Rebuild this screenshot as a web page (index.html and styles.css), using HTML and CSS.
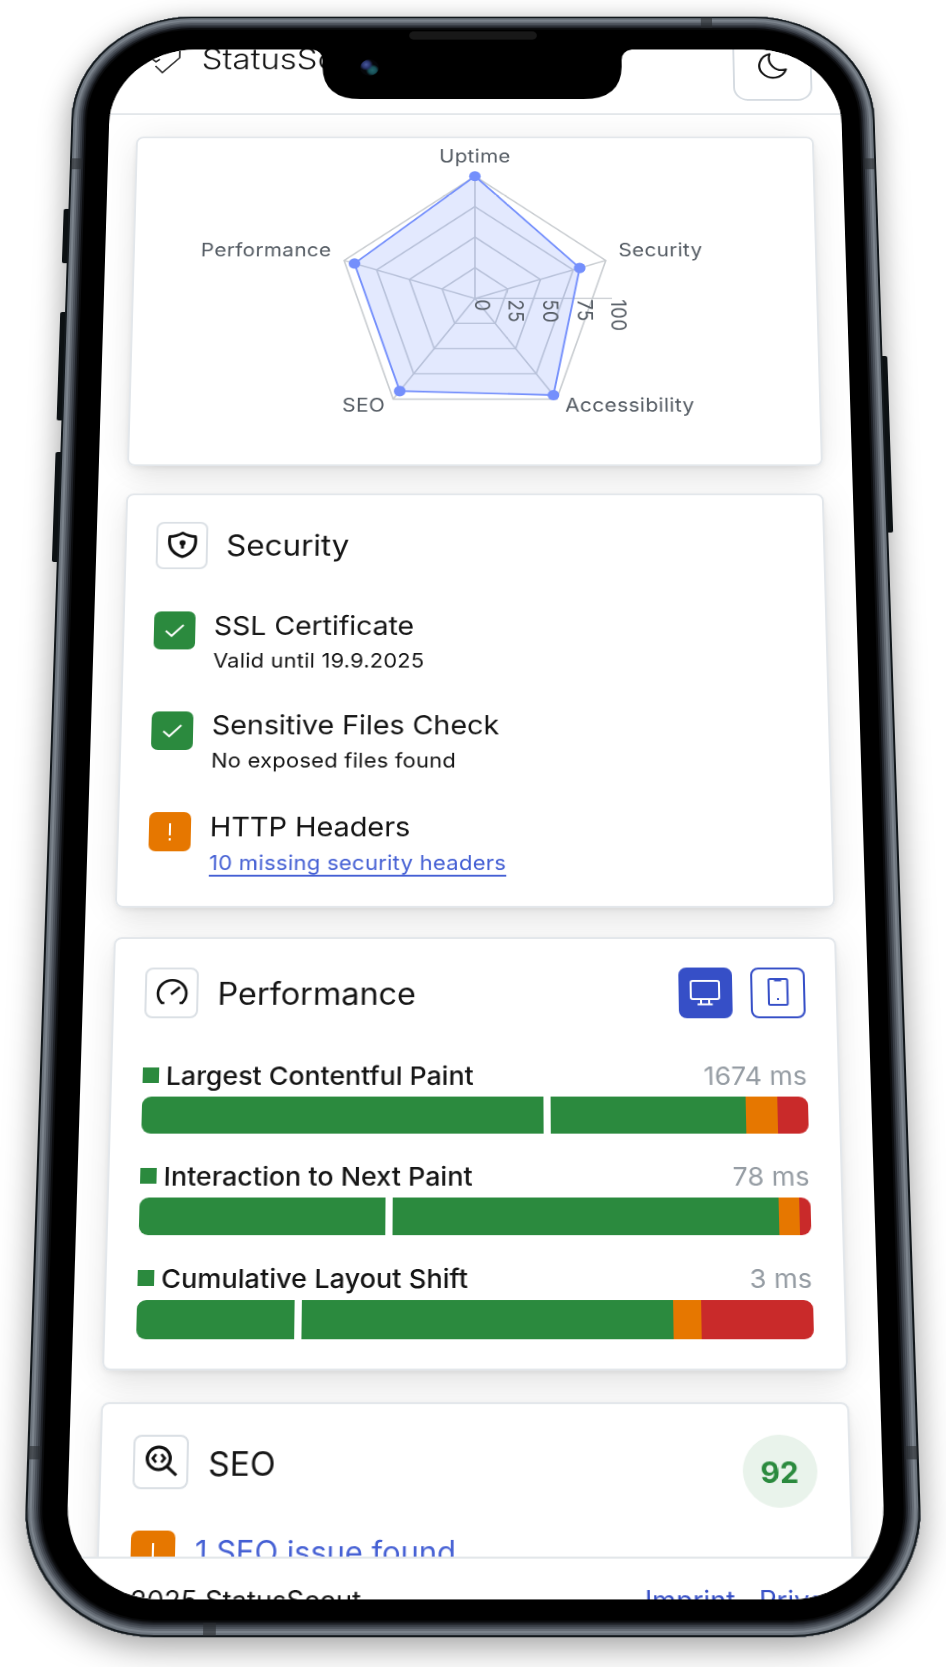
FILE: index.html
```html
<!DOCTYPE html>
<html lang="en">
<head>
<meta charset="utf-8">
<title>StatusScout</title>
<link rel="stylesheet" href="styles.css">
</head>
<body>
<div class="phone">
  <i class="key key-mute"></i><i class="key key-up"></i><i class="key key-down"></i><i class="key key-power"></i>
  <div class="case"></div>
  <i class="band band-tl"></i><i class="band band-tr"></i><i class="band band-bl"></i><i class="band band-br"></i>
  <i class="band band-top"></i><i class="band band-bottom"></i>
  <div class="screen">
    <header class="topbar">
      <div class="brand">
        <svg class="brand-icon" viewBox="0 0 40 40" fill="none" stroke="#222" stroke-width="1.7"><path d="M5 20L10 24L14 21M9.500 29L17 37L35 19V3"/></svg>
        <span class="brand-name">StatusScout</span>
      </div>
      <button class="theme"><svg viewBox="0 0 32 32" fill="none" stroke="#151515" stroke-width="2.2" stroke-linejoin="round"><path d="M14 2.6A14 14 0 1 0 30.500 20.500C20 24 10.500 14 14 2.600Z"/></svg></button>
    </header>
    <main class="main">
      <section class="card chart-card">
        <svg class="chart" viewBox="0 0 711 380">
          <g transform="translate(356 189.200) scale(.966)">
            <g fill="none" stroke="#c9cdd1" stroke-width="1.7">
              <path d="M0-149L141.700-46L87.600 120.500L-87.600 120.500L-141.700-46Z"/>
              <path d="M0-111.700L106.300-34.500L65.700 90.400L-65.700 90.400L-106.300-34.500Z"/>
              <path d="M0-74.500L70.900-23L43.800 60.300L-43.800 60.300L-70.900-23Z"/>
              <path d="M0-37.200L35.400-11.500L21.900 30.100L-21.900 30.100L-35.400-11.500Z"/>
              <path d="M0 0V-149M0 0L141.700-46M0 0L87.600 120.500M0 0L-87.600 120.500M0 0L-141.700-46M0 0H148"/>
            </g>
            <path d="M0-149L113.400-36.800L84.100 115.700L-80.600 110.900L-130.400-42.300Z" fill="#748ffc" fill-opacity=".2" stroke="#748ffc" stroke-width="2"/>
            <g fill="#748ffc"><circle cx="0" cy="-149" r="6.300"/><circle cx="113.400" cy="-36.800" r="6.300"/><circle cx="84.100" cy="115.700" r="6.300"/><circle cx="-80.600" cy="110.900" r="6.300"/><circle cx="-130.400" cy="-42.300" r="6.300"/></g>
            <g class="labels">
              <text x="0" y="-165.500" text-anchor="middle">Uptime</text>
              <text x="155.500" y="-50.700">Security</text>
              <text x="96.500" y="135.200">Accessibility</text>
              <text x="-96" y="135.200" text-anchor="end">SEO</text>
              <text x="-155.500" y="-50.700" text-anchor="end">Performance</text>
              <text transform="translate(-.5 1) rotate(90)">0</text>
              <text transform="translate(36.500 1) rotate(90)">25</text>
              <text transform="translate(73.500 1) rotate(90)">50</text>
              <text transform="translate(110.500 1) rotate(90)">75</text>
              <text transform="translate(147 1) rotate(90)">100</text>
            </g>
          </g>
        </svg>
      </section>

      <section class="card security">
        <div class="head">
          <span class="tile"><svg viewBox="0 0 32 32" fill="none" stroke="#111" stroke-width="3" stroke-linejoin="round"><path d="M16 2.500C12 5 7 6.500 3 6.500C1.500 16 4 25 16 29C28 25 30.500 16 29 6.500C25 6.500 20 5 16 2.500Z"/><circle cx="16" cy="13.500" r="1.600" fill="#111"/><path d="M16 14V20"/></svg></span>
          <h2>Security</h2>
        </div>
        <div class="rows">
          <div class="row"><span class="flag ok"><svg viewBox="0 0 22 22"><path d="M2 11.500L8 17L20 5"/></svg></span><div class="copy"><h3>SSL Certificate</h3><p>Valid until 19.9.2025</p></div></div>
          <div class="row"><span class="flag ok"><svg viewBox="0 0 22 22"><path d="M2 11.500L8 17L20 5"/></svg></span><div class="copy"><h3>Sensitive Files Check</h3><p>No exposed files found</p></div></div>
          <div class="row"><span class="flag warn"><svg viewBox="0 0 22 22"><path d="M11 2V15M11 18V20.500"/></svg></span><div class="copy"><h3>HTTP Headers</h3><p><a>10 missing security headers</a></p></div></div>
        </div>
      </section>

      <section class="card perf">
        <div class="head">
          <span class="tile"><svg viewBox="0 0 32 32" fill="none" stroke="#111" stroke-width="2.600"><path d="M8.500 27H6A14 14 0 1 1 26 27H23.500M15 18L23.500 10.500"/></svg></span>
          <h2>Performance</h2>
          <div class="switch">
            <span class="mode on"><svg viewBox="0 0 32 32" fill="none" stroke="#fff" stroke-width="2"><rect x="2" y="4" width="28" height="19" rx="2"/><path d="M12 23V28M20 23V28M8.500 28.500H23.500"/></svg></span>
            <span class="mode"><svg viewBox="0 0 32 32" fill="none" stroke="#364fc7" stroke-width="2"><rect x="7" y="2" width="18.500" height="27" rx="1.500"/><path d="M12.500 3.500H19.500M15 23H17"/></svg></span>
          </div>
        </div>
        <div class="metric"><div class="legend"><i></i><b>Largest Contentful Paint</b><span>1674 ms</span></div>
          <div class="bar"><i class="g" style="width:393px"></i><i class="gap"></i><i class="g" style="width:191px"></i><i class="o" style="width:31px"></i><i class="r"></i></div></div>
        <div class="metric"><div class="legend"><i></i><b>Interaction to Next Paint</b><span>78 ms</span></div>
          <div class="bar"><i class="g" style="width:238.500px"></i><i class="gap"></i><i class="g" style="width:375.500px"></i><i class="o" style="width:20px"></i><i class="r"></i></div></div>
        <div class="metric"><div class="legend"><i></i><b>Cumulative Layout Shift</b><span>3 ms</span></div>
          <div class="bar"><i class="g" style="width:152px"></i><i class="gap"></i><i class="g" style="width:357.500px"></i><i class="o" style="width:27.500px"></i><i class="r"></i></div></div>
      </section>

      <section class="card seo">
        <div class="head">
          <span class="tile"><svg viewBox="0 0 32 32" fill="none" stroke="#111" stroke-width="3"><circle cx="13.500" cy="13" r="11"/><path d="M21.500 21L30.500 29.500"/><path d="M11 9L7.800 13L11 17M16 9L19.200 13L16 17" stroke-width="2.600"/></svg></span>
          <h2>SEO</h2>
          <span class="score">92</span>
        </div>
        <div class="row"><span class="flag warn"><svg viewBox="0 0 22 22"><path d="M11 2V15M11 18V20.500"/></svg></span><div class="issue">1 SEO issue found</div></div>
      </section>
    </main>
    <footer class="foot"><span>2025 StatusScout</span><nav><a>Imprint</a><a>Privacy</a></nav></footer>
  </div>
  <svg class="notch" viewBox="0 0 340 62"><path d="M0 0H340V1Q329 3 329 14V22Q328 61 288 61H52Q12 61 11 22V14Q11 3 0 1Z" fill="#000"/></svg>
  <i class="speaker"></i>
  <i class="camera"></i>
</div>
</body>
</html>
```

FILE: styles.css
```css
* { box-sizing: border-box; }
html, body { margin: 0; background: #fff; }
body { width: 946px; height: 1667px; overflow: hidden; display: flow-root; font-family: Inter, "Liberation Sans", sans-serif; color: #151515; }
h2, h3, p { margin: 0; font-weight: 400; }

/* Handset, tilted away at the top */
.phone { position: relative; width: 851px; height: 1744px; margin: -100.1px 0 0 47.8px; transform-origin: 425.5px 927.1px; transform: matrix3d(1,0,0,0, 0,.933,0,-.00007256, 0,0,1,0, 0,0,0,1); }
.case { position: absolute; inset: 0 1px 0 0; border-radius: 125px; background: #000;
  box-shadow: inset 0 0 0 2px #12181c, inset 0 0 0 4px #6b737c, inset 0 0 0 6px #7b838c, inset 0 0 0 8px #656c75, inset 0 0 0 10px #4d535c, inset 0 0 0 12px #383d45, inset 0 0 0 14px #1f2228, inset 0 0 0 16px #0b0c0e, 0 8px 32px rgba(0,0,0,.4); }
.key { position: absolute; width: 8px; background: #0f1518; border-radius: 2px; left: -5px; }
.key-mute { top: 231px; height: 64px; }
.key-up { top: 352px; height: 125px; }
.key-down { top: 513px; height: 124px; }
.key-power { left: auto; right: -4px; top: 403px; height: 201px; }
.band { position: absolute; background: rgba(40,44,46,.6); width: 12px; height: 13px; }
.band-tl { left: 1px; top: 171px; }
.band-tr { right: 2px; top: 171px; }
.band-bl { left: 1px; top: 1560px; }
.band-br { right: 2px; top: 1560px; }
.band-top { left: 668px; top: 1px; width: 12px; }
.band-bottom { left: 171px; bottom: 1px; width: 12px; }

.screen { position: absolute; left: 39.5px; top: 40px; width: 775px; height: 1668px; border-radius: 90px; overflow: hidden; isolation: isolate; background: #fff; display: flex; flex-direction: column; }
.notch { position: absolute; z-index: 2; left: 254px; top: 39px; width: 340px; height: 62px; }
.speaker { position: absolute; z-index: 3; left: 357px; top: 18px; width: 136px; height: 10px; border-radius: 5px; background: #181818; }
.camera { position: absolute; z-index: 3; left: 305px; top: 52px; width: 20px; height: 20px; border-radius: 50%; background: radial-gradient(circle at 32% 32%, #4a5aa0 0, #28336a 22%, transparent 38%), radial-gradient(circle at 66% 66%, #24666d 0, #174f57 22%, transparent 38%), #050609; }

.topbar { flex: none; height: 79px; border-bottom: 2px solid #e3e7ea; background: #fff; display: flex; justify-content: space-between; align-items: flex-end; padding: 0 30px 15px 38px; }
.brand { display: flex; align-items: flex-end; }
.brand-icon { width: 40px; height: 40px; margin-bottom: 30.7px; }
.brand-name { font-size: 35px; font-weight: 300; line-height: 44px; margin: 0 0 29.5px 19px; }
.theme { flex: none; width: 83.5px; height: 82px; padding: 0 0 4px; border: 2px solid #d5dbe1; border-radius: 16px; background: #fff; display: grid; place-items: center; }
.theme svg { width: 33px; height: 33px; }

.main { flex: 1; min-height: 0; overflow: hidden; isolation: isolate; padding: 25.5px 30px 0 29.5px; display: flex; flex-direction: column; gap: 31px; }
.card { flex: none; position: relative; border: 2px solid #e3e7eb; border-radius: 8px; background: #fff; padding: 30px 30px 30px 30.3px; height: 451.5px; }
/* Shadows sit under every card so that none falls on a neighbour */
.card::before { content: ""; position: absolute; z-index: -1; inset: -2px; border-radius: 8px; box-shadow: 0 2px 5px rgba(0,0,0,.06), 0 16px 26px -6px rgba(0,0,0,.08), 0 0 40px rgba(0,0,0,.07); }
.chart-card { padding: 0; height: 384px; }
.chart { display: block; width: 711px; height: 380px; }
.labels { font-size: 22.4px; letter-spacing: .4px; fill: #545b63; }
.security { height: 453px; }
.perf { height: 442px; }
.head { display: flex; align-items: center; height: 53px; }
.tile { width: 53px; height: 53px; border: 2px solid #dbe0e5; border-radius: 8px; display: grid; place-items: center; }
.tile svg { width: 32px; height: 32px; }
.head h2 { font-size: 32px; line-height: 40px; margin: 1px 0 0 18.5px; }
.rows { display: flex; flex-direction: column; gap: 35.5px; margin-top: 47.5px; }
.row { display: flex; gap: 18.5px; }
.flag { flex: none; width: 42px; height: 42px; border-radius: 7px; display: grid; place-items: center; }
.flag svg { width: 22px; height: 22px; fill: none; stroke: #fff; stroke-width: 2; }
.ok { background: #2b8a3e; }
.warn { background: #e67700; }
.copy { margin-top: -3.5px; }
.copy h3 { font-size: 29px; line-height: 38px; letter-spacing: -.1px; }
.copy p { font-size: 22px; line-height: 39.5px; height: 39.5px; letter-spacing: .25px; }
.copy a { color: #4560d4; text-decoration: underline; text-decoration-thickness: 1.5px; text-underline-offset: 5px; }

.switch { display: flex; gap: 18px; margin-left: auto; }
.mode { width: 53.5px; height: 53px; border: 2px solid #364fc7; border-radius: 8px; display: grid; place-items: center; }
.mode svg { width: 32px; height: 32px; }
.mode.on { background: #364fc7; }
.metric { margin-top: 25px; }
.head + .metric { margin-top: 41.5px; }
.perf .head h2 { margin-top: 3px; }
.legend { display: flex; align-items: baseline; height: 39.5px; line-height: 38px; font-size: 26.2px; }
.legend i { width: 16px; height: 16px; margin-right: 6.5px; background: #2b8a3e; position: relative; top: -2px; }
.legend b { font-weight: 500; }
.legend span { margin-left: auto; color: #959ca3; }
.bar { display: flex; height: 38.7px; border-radius: 9px; overflow: hidden; }
.bar i { flex: none; }
.g { background: #2b8a3e; }
.bar .gap { width: 7px; }
.o { background: #e67700; }
.bar .r { flex: 1; background: #c92a2a; }

.seo .head { height: 71px; align-items: flex-start; }
.seo .head h2 { margin-top: 9px; }
.score { width: 71px; height: 71.5px; margin-left: auto; border-radius: 50%; background: #e9f3eb; color: #2b8a3e; font-weight: 700; font-size: 28.5px; line-height: 74px; text-align: center; }
.seo .row { margin-top: 22.5px; }
.issue { color: #4560d4; font-size: 29.2px; line-height: 42px; }
.foot { flex: none; height: 41.5px; border-top: 2px solid #e3e7ea; background: #fff; display: flex; justify-content: space-between; padding: 20px 29px 0 62px; font-size: 25.8px; line-height: 40px; white-space: nowrap; }
.foot nav { display: flex; gap: 22.5px; color: #364fc7; }
```
